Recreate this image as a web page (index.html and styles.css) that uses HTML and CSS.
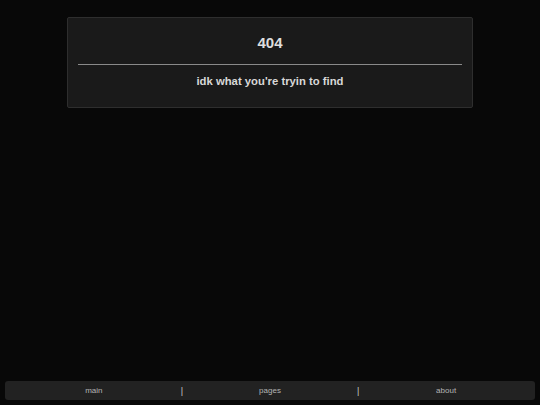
FILE: index.html
```html
<!DOCTYPE html>
<html>
<head>
<meta charset="utf-8">
<link rel="stylesheet" href="styles.css">
</head>
<body>
<main class="card">
  <h1 class="code">404</h1>
  <hr class="rule">
  <p class="msg">idk what you're tryin to find</p>
</main>
<nav class="footer">
  <a class="link" href="#">main</a>
  <span class="sep">|</span>
  <a class="link" href="#">pages</a>
  <span class="sep">|</span>
  <a class="link" href="#">about</a>
</nav>
</body>
</html>
```
FILE: styles.css
```css
html, body {
  margin: 0;
  padding: 0;
  background: #080808;
  height: 100%;
}
body {
  font-family: "Liberation Sans", Arial, sans-serif;
  color: #e0e0e0;
  padding-top: 17px;
  box-sizing: border-box;
}
.card {
  width: 406px;
  margin: 0 auto;
  box-sizing: border-box;
  background: #1a1a1a;
  border: 1px solid #2e2e2e;
  border-radius: 2px;
  padding: 0 10px;
  height: 91px;
  text-align: center;
}
.code {
  margin: 0;
  padding-top: 16px;
  font-size: 15px;
  line-height: 18px;
  font-weight: bold;
  color: #dedede;
}
.rule {
  border: 0;
  height: 1px;
  background: #8a8a8a;
  margin: 12px 0 0 0;
}
.msg {
  margin: 9px 0 0 0;
  font-size: 11.3px;
  line-height: 14px;
  font-weight: bold;
  color: #d8d8d8;
}
.footer {
  position: fixed;
  left: 5px;
  right: 5px;
  bottom: 5px;
  height: 19px;
  background: #222222;
  border-radius: 3px;
  display: grid;
  grid-template-columns: 1fr auto 1fr auto 1fr;
  align-items: center;
  font-size: 8px;
  padding: 0 2px;
}
.link {
  color: #b4b4b4;
  text-decoration: none;
  text-align: center;
}
.sep {
  color: #c8c8c8;
  font-size: 9px;
}
```
